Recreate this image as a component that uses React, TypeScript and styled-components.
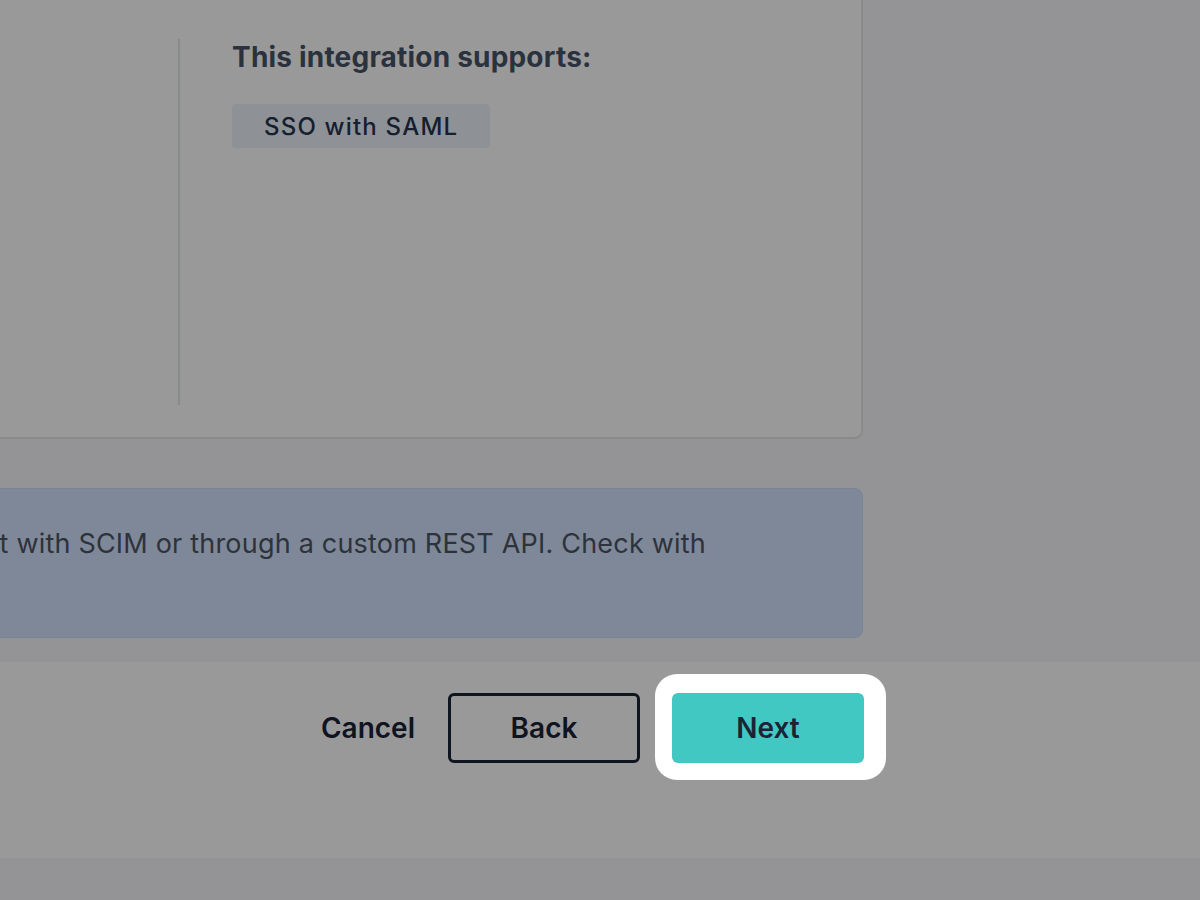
import { createGlobalStyle, styled } from "styled-components";

// page is scrolled/zoomed: the content column runs off the left edge
const COLUMN_WIDTH = 1189;
const COLUMN_RIGHT = 863;

const GlobalStyle = createGlobalStyle`
  * {
    box-sizing: border-box;
  }

  html,
  body {
    margin: 0;
    padding: 0;
  }

  body {
    background: #f7f7fa;
    font-family: Inter, "Noto Sans", sans-serif;
    color: #1a2436;
    overflow: hidden;
  }
`;

export default function App() {
  return (
    <>
      <GlobalStyle />
      <Page>
        <Main>
          <Column>
            <Card>
              <CardHeader>
                <AppName>Okta</AppName>
              </CardHeader>
              <CardBody>
                <AppInfo>
                  <Logo />
                  <AppMeta>Identity</AppMeta>
                </AppInfo>
                <Supports>
                  <SupportsTitle>This integration supports:</SupportsTitle>
                  <TagList>
                    <Tag>SSO with SAML</Tag>
                  </TagList>
                </Supports>
              </CardBody>
            </Card>
            <Notice>
              Provisioning can be set with SCIM or through a custom REST API.
              Check with your provider.
            </Notice>
          </Column>
        </Main>
        <Footer>
          <FooterRow>
            <CancelButton>Cancel</CancelButton>
            <OutlineButton>Back</OutlineButton>
            <Spotlight>
              <PrimaryButton>Next</PrimaryButton>
            </Spotlight>
          </FooterRow>
        </Footer>
        <Backdrop />
      </Page>
    </>
  );
}

const Page = styled.div`
  width: 1200px;
  height: 900px;
  overflow: hidden;
  background: #f7f7fa;
`;

const Main = styled.main`
  padding-bottom: 24px;
`;

const Column = styled.div`
  width: ${COLUMN_WIDTH}px;
  margin-left: ${COLUMN_RIGHT - COLUMN_WIDTH}px;
  margin-top: -79px;

  display: flex;
  flex-direction: column;
  gap: 49px;
`;

const Card = styled.section`
  background: #ffffff;
  border: 2px solid #e6e6e6;
  border-radius: 8px;
  padding: 32px;
`;

const CardHeader = styled.div`
  height: 60px;
  margin-bottom: 24px;
  display: flex;
  align-items: center;
`;

const AppName = styled.h2`
  margin: 0;
  font-size: 28px;
  font-weight: 700;
`;

const CardBody = styled.div`
  display: grid;
  grid-template-columns: 1fr 651px;
`;

const AppInfo = styled.div`
  display: flex;
  flex-direction: column;
  gap: 12px;
  max-width: 200px;
`;

const Logo = styled.div`
  width: 64px;
  height: 64px;
  border-radius: 12px;
  background: #1a2436;
`;

const AppMeta = styled.span`
  font-size: 18px;
  color: #4b5563;
`;

const Supports = styled.div`
  min-height: 366px;
  border-left: 2px solid #e2e8e8;
  padding-left: 52px;
`;

const SupportsTitle = styled.h3`
  margin: 2px 0 0;
  font-size: 28px;
  font-weight: 700;
  line-height: 1.2;
  letter-spacing: 0.2px;
  color: #475467;
`;

const TagList = styled.div`
  display: flex;
  flex-wrap: wrap;
  gap: 12px;
  margin-top: 29px;
`;

const Tag = styled.span`
  height: 44px;
  line-height: 45px;
  padding: 0 32px;
  border-radius: 4px;
  background: #edf2fa;
  color: #25354d;
  font-size: 24px;
  font-weight: 500;
  letter-spacing: 1.2px;
`;

const Notice = styled.div`
  background: #d4e3fd;
  border: 1px solid #cadcf8;
  border-radius: 8px;
  padding: 35px 140px 33px 32px;
  font-size: 27px;
  line-height: 40px;
  letter-spacing: 0.2px;
  color: #4b5563;
`;

const Footer = styled.footer`
  height: 196px;
  padding-top: 31px;
  background: #ffffff;
`;

const FooterRow = styled.div`
  width: ${COLUMN_WIDTH}px;
  margin-left: ${COLUMN_RIGHT - COLUMN_WIDTH + 1}px;

  display: flex;
  justify-content: flex-end;
  align-items: center;
  gap: 32px;
`;

const BaseButton = styled.button`
  height: 70px;
  font-family: Inter, "Noto Sans", sans-serif;
  font-size: 28px;
  font-weight: 600;
  color: #1a2436;
  cursor: pointer;
`;

const CancelButton = styled(BaseButton)`
  padding: 0;
  margin-right: 1px;
  background: none;
  border: none;
`;

const OutlineButton = styled(BaseButton)`
  width: 192px;
  background: transparent;
  border: 3px solid #1a2436;
  border-radius: 6px;
`;

const PrimaryButton = styled(BaseButton)`
  width: 192px;
  background: #42c8c2;
  border: none;
  border-radius: 6px;
`;

// highlighted step of the tour, sits above the backdrop
const Spotlight = styled.div`
  position: relative;
  z-index: 11;
  display: flex;

  &::before {
    content: "";
    position: absolute;
    inset: -19px -22px -17px -17px;
    background: #ffffff;
    border-radius: 22px;
    z-index: -1;
  }
`;

const Backdrop = styled.div`
  position: fixed;
  inset: 0;
  z-index: 10;
  background: rgba(0, 0, 0, 0.4);
  pointer-events: none;
`;
